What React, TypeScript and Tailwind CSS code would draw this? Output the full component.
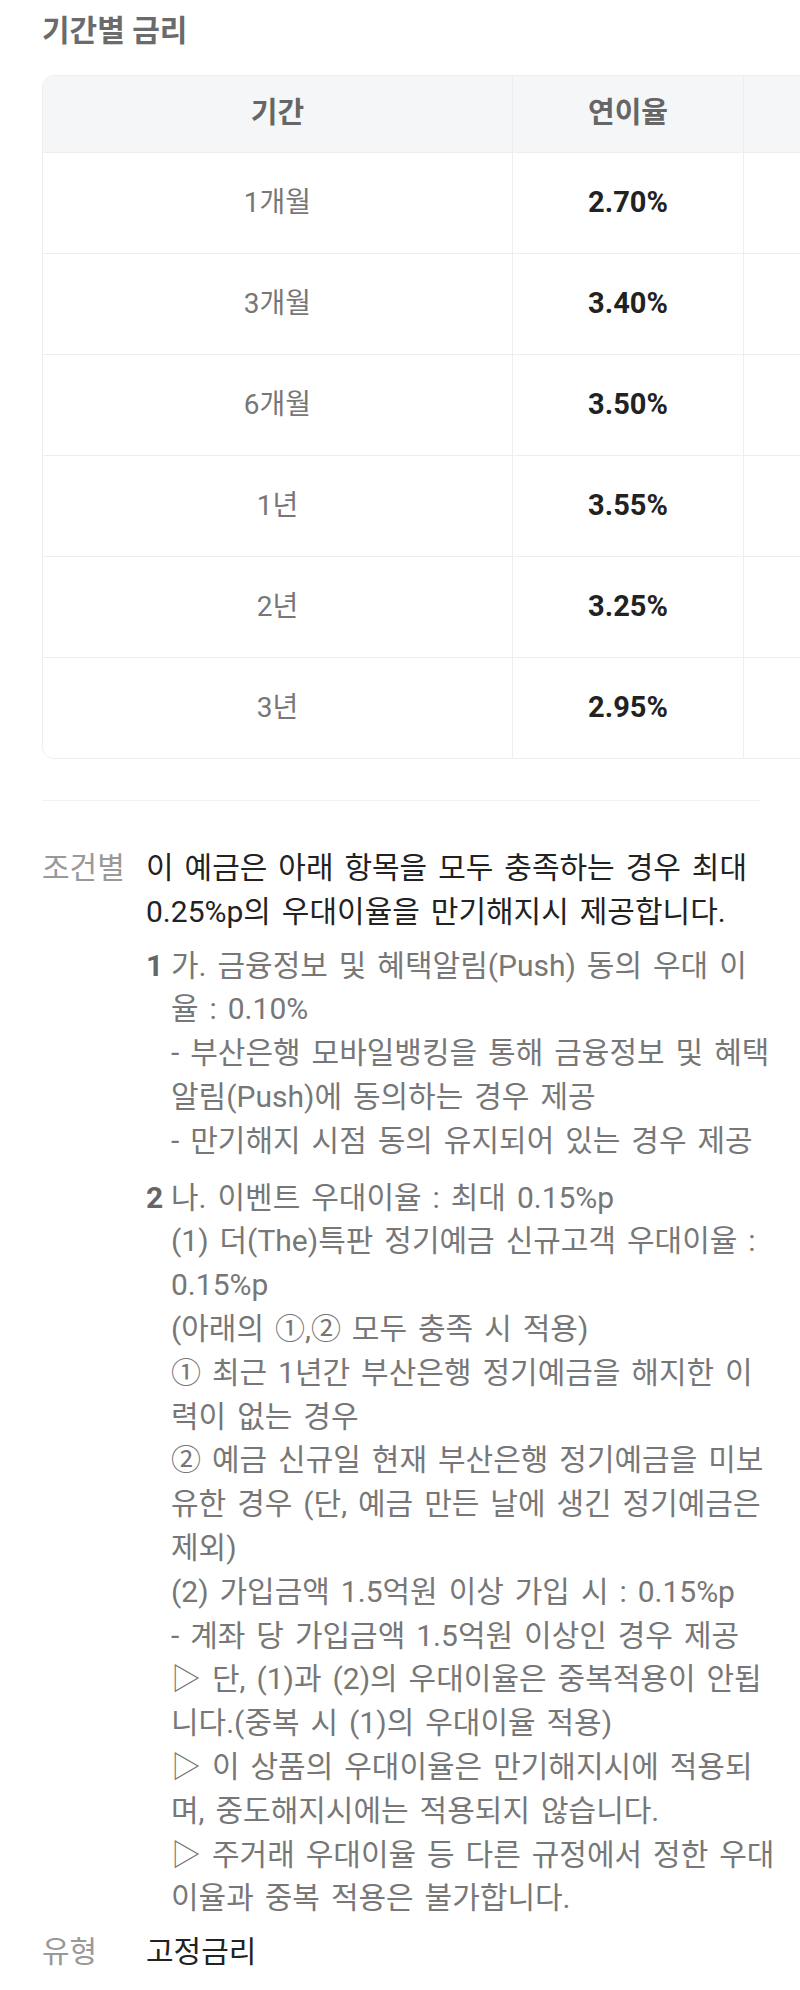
import React from "react";

const FONT = { fontFamily: "Roboto, 'Noto Sans CJK KR', sans-serif" };

const rows: [string, string][] = [
  ["1개월", "2.70%"],
  ["3개월", "3.40%"],
  ["6개월", "3.50%"],
  ["1년", "3.55%"],
  ["2년", "3.25%"],
  ["3년", "2.95%"],
];

const item1 = [
  "가. 금융정보 및 혜택알림(Push) 동의 우대 이",
  "율 : 0.10%",
  "- 부산은행 모바일뱅킹을 통해 금융정보 및 혜택",
  "알림(Push)에 동의하는 경우 제공",
  "- 만기해지 시점 동의 유지되어 있는 경우 제공",
];

const item2 = [
  "나. 이벤트 우대이율 : 최대 0.15%p",
  "(1) 더(The)특판 정기예금 신규고객 우대이율 :",
  "0.15%p",
  "(아래의 ①,② 모두 충족 시 적용)",
  "① 최근 1년간 부산은행 정기예금을 해지한 이",
  "력이 없는 경우",
  "② 예금 신규일 현재 부산은행 정기예금을 미보",
  "유한 경우 (단, 예금 만든 날에 생긴 정기예금은",
  "제외)",
  "(2) 가입금액 1.5억원 이상 가입 시 : 0.15%p",
  "- 계좌 당 가입금액 1.5억원 이상인 경우 제공",
  "▷ 단, (1)과 (2)의 우대이율은 중복적용이 안됩",
  "니다.(중복 시 (1)의 우대이율 적용)",
  "▷ 이 상품의 우대이율은 만기해지시에 적용되",
  "며, 중도해지시에는 적용되지 않습니다.",
  "▷ 주거래 우대이율 등 다른 규정에서 정한 우대",
  "이율과 중복 적용은 불가합니다.",
];

function ListItem({ n, lines }: { n: string; lines: string[] }) {
  return (
    <div className="flex">
      <div className="w-[25px] shrink-0 font-bold text-[#666666]">{n}</div>
      <div className="text-[#777777]">
        {lines.map((l, i) => (
          <div key={i} className="whitespace-nowrap">
            {l}
          </div>
        ))}
      </div>
    </div>
  );
}

export default function App() {
  return (
    <div className="w-[800px] min-h-[1990px] bg-white overflow-hidden" style={FONT}>
      <div className="pl-[42px] pr-[40px] pt-[11px]">
        <h2 className="h-[40px] leading-[40px] text-[30px] font-bold text-[#6b6b6b]">
          기간별 금리
        </h2>

        <div className="mt-[24px] -mr-[40px] overflow-hidden">
          <div className="w-[1000px] rounded-l-[12px] border border-[#eeeeee] overflow-hidden">
            <div className="flex h-[76px] bg-[#f5f6f8] text-[29px] font-bold text-[#666666]">
              <div className="w-[469px] flex items-center justify-center">기간</div>
              <div className="w-[231px] flex items-center justify-center border-l border-[#eeeeee]">
                연이율
              </div>
              <div className="flex-1 border-l border-[#eeeeee]"></div>
            </div>
            {rows.map(([p, r]) => (
              <div key={p} className="flex h-[101px] border-t border-[#eeeeee]">
                <div className="w-[469px] flex items-center justify-center text-[28px] text-[#777777]">
                  {p}
                </div>
                <div className="w-[231px] flex items-center justify-center border-l border-[#eeeeee] text-[29px] font-bold text-[#222222]">
                  {r}
                </div>
                <div className="flex-1 border-l border-[#eeeeee]"></div>
              </div>
            ))}
          </div>
        </div>

        <div className="mt-[41px] h-px bg-[#f2f2f2]"></div>

        <div className="mt-[45px] text-[30px] leading-[43.8px] [word-spacing:3.5px]">
          <div className="flex">
            <div className="w-[104px] shrink-0 text-[#999999]">조건별</div>
            <div className="flex-1">
              <div className="text-[#222222]">
                <div className="whitespace-nowrap">이 예금은 아래 항목을 모두 충족하는 경우 최대</div>
                <div className="whitespace-nowrap">0.25%p의 우대이율을 만기해지시 제공합니다.</div>
              </div>
              <div className="mt-[10px]">
                <ListItem n="1" lines={item1} />
              </div>
              <div className="mt-[13px]">
                <ListItem n="2" lines={item2} />
              </div>
            </div>
          </div>
          <div className="flex mt-[10px]">
            <div className="w-[104px] shrink-0 text-[#999999]">유형</div>
            <div className="flex-1 text-[#222222]">고정금리</div>
          </div>
        </div>
      </div>
    </div>
  );
}
